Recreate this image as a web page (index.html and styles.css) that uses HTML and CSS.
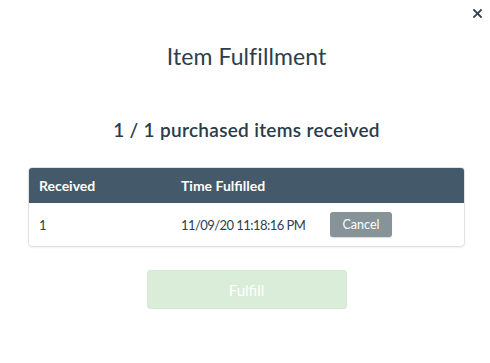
FILE: index.html
```html
<!DOCTYPE html>
<html>
<head>
<meta charset="utf-8">
<link rel="stylesheet" href="styles.css">
</head>
<body>
<div class="modal">
  <div class="close-row">
    <button class="close" aria-label="Close">
      <svg width="9" height="9" viewBox="0 0 9 9"><path d="M1 1L8 8M8 1L1 8" stroke="#2f4352" stroke-width="1.8" stroke-linecap="square"/></svg>
    </button>
  </div>
  <h1 class="title">Item Fulfillment</h1>
  <h2 class="summary">1 / 1 purchased items received</h2>
  <div class="table">
    <div class="row head">
      <div class="c1">Received</div>
      <div class="c2">Time Fulfilled</div>
      <div class="c3"></div>
    </div>
    <div class="row body">
      <div class="c1">1</div>
      <div class="c2 time">11/09/20 11:18:16 PM</div>
      <div class="c3"><button class="cancel">Cancel</button></div>
    </div>
  </div>
  <div class="actions">
    <button class="fulfill" disabled>Fulfill</button>
  </div>
</div>
</body>
</html>
```

FILE: styles.css
```css
* { box-sizing: border-box; }
html, body { margin: 0; padding: 0; background: #fff; }
body {
  font-family: Lato, "Open Sans", sans-serif;
  color: #2c3e4c;
  width: 490px;
  height: 363px;
  overflow: hidden;
}
.modal {
  padding: 0 25px 0 28px;
  display: flex;
  flex-direction: column;
}
.close-row {
  display: flex;
  justify-content: flex-end;
  height: 27px;
  padding-top: 9px;
  margin-right: -17px;
}
.close {
  border: 0;
  background: none;
  padding: 0;
  width: 9px;
  height: 9px;
  display: flex;
}
.title {
  margin: 15px 0 0;
  font-size: 23px;
  font-weight: 400;
  text-align: center;
  line-height: 28px;
  color: #2c3e4c;
  letter-spacing: 0.1px;
}
.summary {
  margin: 48px 0 0;
  font-size: 19px;
  font-weight: 600;
  text-align: center;
  line-height: 24px;
  color: #2a3b4a;
  letter-spacing: 0.3px;
}
.table {
  margin-top: 25px;
  border: 1px solid #dfe3e5;
  border-radius: 4px;
  overflow: hidden;
  box-shadow: 0 1px 2px rgba(0,0,0,0.06);
}
.row {
  display: grid;
  grid-template-columns: 142px 149px 1fr;
  align-items: center;
  padding-left: 10px;
  font-size: 13px;
}
.head {
  background: #445a6a;
  color: #fff;
  font-weight: 700;
  font-size: 14px;
  height: 36px;
  margin: -1px -1px 0;
  padding-left: 11px;
}
.body {
  height: 43px;
  color: #2c3e4c;
}
.time {
  letter-spacing: -0.55px;
}
.cancel {
  font-family: Lato, "Open Sans", sans-serif;
  background: #869399;
  color: #fff;
  border: 0;
  border-radius: 3px;
  width: 62px;
  height: 25px;
  font-size: 12.5px;
  box-shadow: 0 1px 1px rgba(0,0,0,0.15);
}
.actions {
  display: flex;
  justify-content: center;
  margin-top: 23px;
}
.fulfill {
  font-family: Lato, "Open Sans", sans-serif;
  width: 200px;
  height: 39px;
  border: 1px solid #d4e9d3;
  background: #d9edd8;
  color: #fff;
  font-size: 15px;
  border-radius: 3px;
}
```
